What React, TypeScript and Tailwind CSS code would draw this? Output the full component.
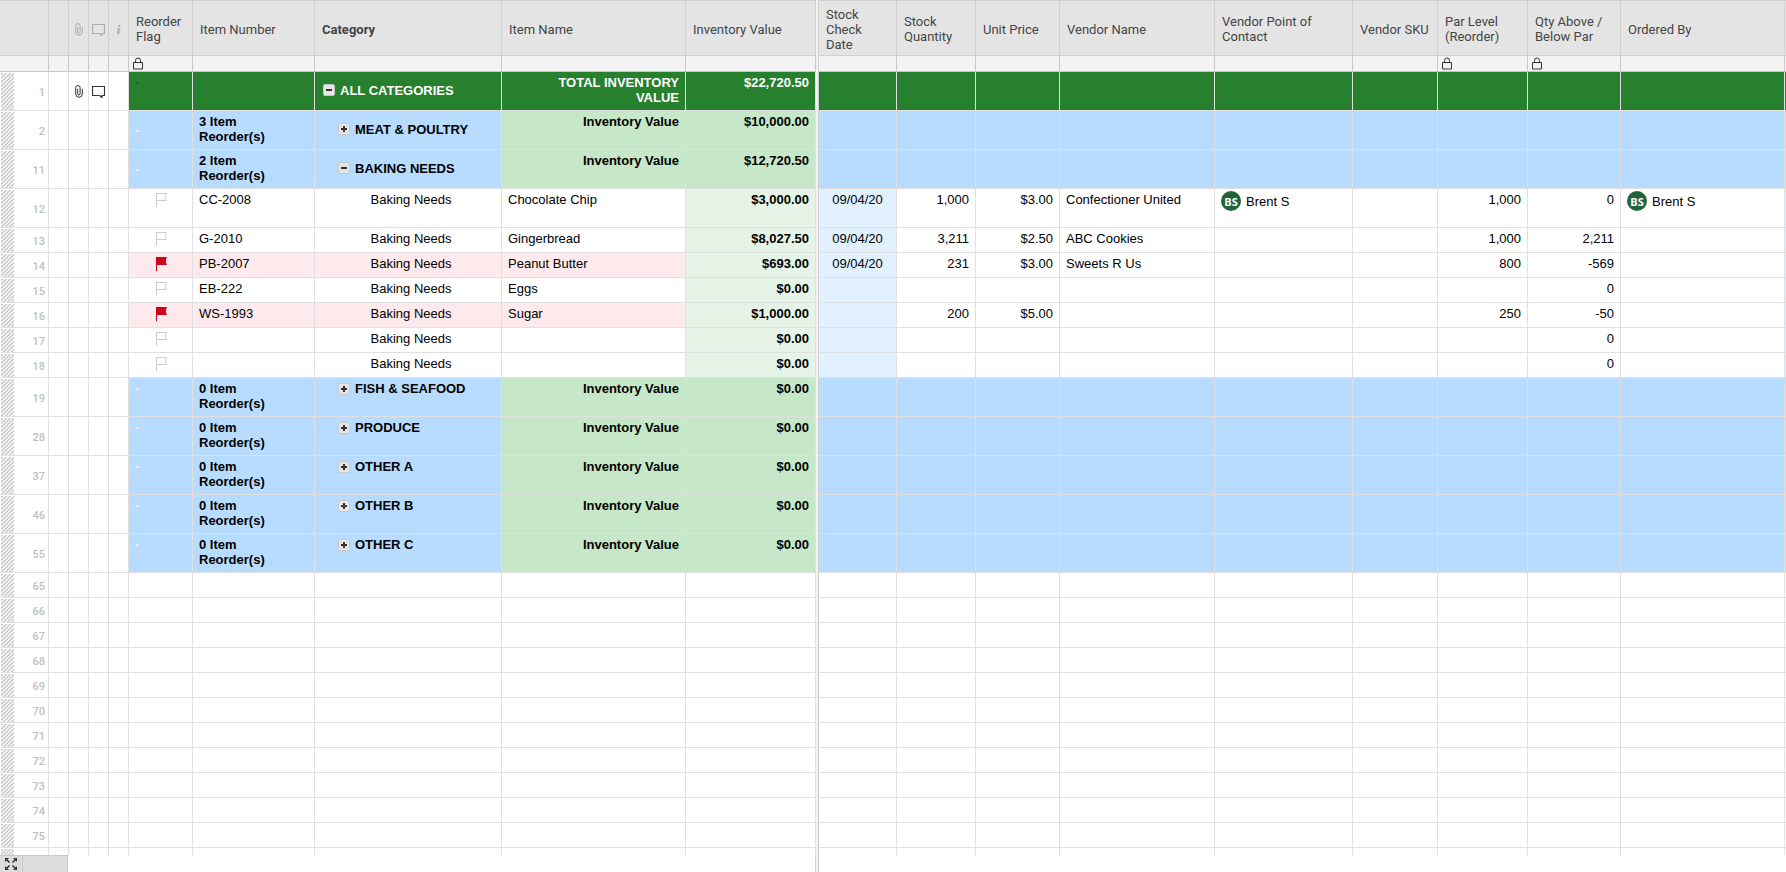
import type { ReactNode } from "react";

type Column = {
  key: string;
  label: string;
  width: string;
  bold?: boolean;
  locked?: boolean;
  align?: "left" | "center" | "right";
};

type Row = {
  num?: number;
  kind: "total" | "group" | "item" | "blank";
  tall?: boolean;
  attachments?: boolean;
  flag?: boolean;
  open?: boolean;
  middle?: boolean;
  values?: Record<string, string>;
};

const frozen: Column[] = [
  { key: "flag", label: "Reorder Flag", width: "w-[64px]", locked: true },
  { key: "number", label: "Item Number", width: "w-[122px]" },
  { key: "category", label: "Category", width: "w-[187px]", bold: true },
  { key: "name", label: "Item Name", width: "w-[184px]" },
  { key: "value", label: "Inventory Value", width: "w-[130px]", align: "right" },
];

const scrolling: Column[] = [
  { key: "checked", label: "Stock Check Date", width: "w-[78px]", align: "center" },
  { key: "quantity", label: "Stock Quantity", width: "w-[79px]", align: "right" },
  { key: "price", label: "Unit Price", width: "w-[84px]", align: "right" },
  { key: "vendor", label: "Vendor Name", width: "w-[155px]" },
  { key: "contact", label: "Vendor Point of Contact", width: "w-[138px]" },
  { key: "sku", label: "Vendor SKU", width: "w-[85px]" },
  { key: "par", label: "Par Level (Reorder)", width: "w-[90px]", locked: true, align: "right" },
  { key: "diff", label: "Qty Above / Below Par", width: "w-[93px]", locked: true, align: "right" },
  { key: "ordered", label: "Ordered By", width: "w-auto" },
];

const group = (num: number, category: string, reorders: number, value = "$0.00"): Row => ({
  num,
  kind: "group",
  tall: true,
  values: { number: `${reorders} Item Reorder(s)`, category, name: "Inventory Value", value },
});

const rows: Row[] = [
  {
    num: 1,
    kind: "total",
    tall: true,
    attachments: true,
    open: true,
    middle: true,
    values: { category: "ALL CATEGORIES", name: "TOTAL INVENTORY VALUE", value: "$22,720.50" },
  },
  { ...group(2, "MEAT & POULTRY", 3, "$10,000.00"), middle: true },
  { ...group(11, "BAKING NEEDS", 2, "$12,720.50"), middle: true, open: true },
  {
    num: 12,
    kind: "item",
    tall: true,
    values: {
      number: "CC-2008", category: "Baking Needs", name: "Chocolate Chip", value: "$3,000.00",
      checked: "09/04/20", quantity: "1,000", price: "$3.00", vendor: "Confectioner United",
      contact: "Brent S", par: "1,000", diff: "0", ordered: "Brent S",
    },
  },
  {
    num: 13,
    kind: "item",
    values: {
      number: "G-2010", category: "Baking Needs", name: "Gingerbread", value: "$8,027.50",
      checked: "09/04/20", quantity: "3,211", price: "$2.50", vendor: "ABC Cookies",
      par: "1,000", diff: "2,211",
    },
  },
  {
    num: 14,
    kind: "item",
    flag: true,
    values: {
      number: "PB-2007", category: "Baking Needs", name: "Peanut Butter", value: "$693.00",
      checked: "09/04/20", quantity: "231", price: "$3.00", vendor: "Sweets R Us",
      par: "800", diff: "-569",
    },
  },
  { num: 15, kind: "item", values: { number: "EB-222", category: "Baking Needs", name: "Eggs", value: "$0.00", diff: "0" } },
  {
    num: 16,
    kind: "item",
    flag: true,
    values: {
      number: "WS-1993", category: "Baking Needs", name: "Sugar", value: "$1,000.00",
      quantity: "200", price: "$5.00", par: "250", diff: "-50",
    },
  },
  { num: 17, kind: "item", values: { category: "Baking Needs", value: "$0.00", diff: "0" } },
  { num: 18, kind: "item", values: { category: "Baking Needs", value: "$0.00", diff: "0" } },
  group(19, "FISH & SEAFOOD", 0),
  group(28, "PRODUCE", 0),
  group(37, "OTHER A", 0),
  group(46, "OTHER B", 0),
  group(55, "OTHER C", 0),
  ...Array.from({ length: 11 }, (_, i): Row => ({ num: 65 + i, kind: "blank" })),
  { kind: "blank" },
];

function Paperclip({ className }: { className: string }) {
  return (
    <svg width="8" height="13" viewBox="0 0 8 13" fill="none" stroke="currentColor" className={className}>
      <path d="M2.7 3.8v5a1.2 1.2 0 0 0 2.4 0V2.700a2.200 2.200 0 0 0-4.400 0v6.300a3.300 3.300 0 0 0 6.600 0V3.800" />
    </svg>
  );
}

function Comment({ className }: { className: string }) {
  return (
    <svg width="13" height="13" viewBox="0 0 13 13" fill="none" stroke="currentColor" className={className}>
      <path d="M.5 1.500h12v9h-2.500v2l-2.500-2h-7z" strokeWidth="1.200" />
    </svg>
  );
}

function Lock() {
  return (
    <svg width="10" height="13" viewBox="0 0 10 13" fill="none" stroke="#333" className="ml-1" aria-label="Locked">
      <path d="M.5 5.5h9v6.500h-9zM2.500 5.500v-2a2.500 2.500 0 0 1 5 0v2" />
    </svg>
  );
}

function Flag({ on }: { on?: boolean }) {
  return (
    <svg width="12" height="15" viewBox="0 0 12 15" fill={on ? "#d0021b" : "none"} stroke={on ? "#d0021b" : "#ccc"} className="ml-5">
      <path d="M1.500 15V1M1.500 1.500h10c-1.600 2.400-1.600 4.600 0 7h-10z" />
    </svg>
  );
}

function Toggle({ open }: { open?: boolean }) {
  return (
    <button
      aria-label={open ? "Collapse" : "Expand"}
      className="flex size-3 shrink-0 items-center justify-center rounded-xs border border-[#c8c8c8] bg-[#e6e6e6]"
    >
      <svg width="6" height="6" viewBox="0 0 6 6" stroke="#333" strokeWidth="2">
        <path d={open ? "M0 3h6" : "M0 3h6M3 0v6"} />
      </svg>
    </button>
  );
}

function Person({ name }: { name: string }) {
  return (
    <span className="-mt-px flex items-center gap-[5px]">
      <span className="flex size-5 items-center justify-center rounded-full bg-[#236339] font-['Open_Sans',sans-serif] text-[11px] font-bold text-white">
        BS
      </span>
      {name}
    </span>
  );
}

const line = "border-r border-b border-[#e0e0e0]";

function cellColor(row: Row, key: string) {
  if (row.kind === "total") return "bg-[#26802d] text-white";
  if (row.kind === "group") return key === "name" || key === "value" ? "bg-[#c6e7c8]" : "bg-[#b8dcff]";
  if (row.kind === "item") {
    if (key === "value") return "bg-[#e6f4e7]";
    if (key === "checked") return "bg-[#e1f1ff]";
    if (row.flag && ["flag", "number", "category", "name"].includes(key)) return "bg-[#feeaec]";
  }
  return "bg-white";
}

function cellPadding(row: Row, key: string) {
  if (key === "number") return "pt-[3px] pr-5 pb-[3px] pl-1.5";
  if (key === "name" && row.kind === "total") return "pt-[3px] pr-1.5 pb-[3px] pl-5";
  if (key === "category" && row.kind === "item") return "pt-[3px] pr-1.5 pb-[3px] pl-3";
  if (key === "category" && row.middle) return "px-1.5 pt-[3px] pb-[5px]";
  return "px-1.5 py-[3px]";
}

function Cell({ row, col }: { row: Row; col: Column }) {
  const summary = row.kind === "total" || row.kind === "group";
  const text = row.values?.[col.key];
  let align = col.align ?? "left";
  if (summary && col.key === "name") align = "right";
  if (row.kind === "item" && col.key === "category") align = "center";

  const middle =
    row.middle && (col.key === "category" || (col.key === "flag" && row.kind === "group"));

  let content: ReactNode = text;
  if (col.key === "flag") {
    if (row.kind === "item") content = <Flag on={row.flag} />;
    if (row.kind === "total") content = <span className="text-[#1d4a80]">-</span>;
    if (row.kind === "group") content = <span className="text-[#e6f2ff]">-</span>;
  } else if (col.key === "category" && summary) {
    content = (
      <span className={row.kind === "total" ? "flex items-center gap-[5px] pl-0.5" : "flex items-center gap-[5px] pl-[17px]"}>
        <Toggle open={row.open} />
        {text}
      </span>
    );
  } else if (text && (col.key === "contact" || col.key === "ordered")) {
    content = <Person name={text} />;
  }

  return (
    <td
      className={[
        line,
        cellPadding(row, col.key),
        cellColor(row, col.key),
        summary || col.key === "value" ? "font-bold" : "",
        middle ? "align-middle" : "align-top",
        align === "right" ? "text-right" : align === "center" ? "text-center" : "text-left",
      ].join(" ")}
    >
      {content}
    </td>
  );
}

function HeaderCell({ col }: { col: Column }) {
  return (
    <th
      scope="col"
      className={`border-t border-r border-b border-[#d0d0d0] px-[7px] pt-1 pb-0.5 text-left align-middle ${col.bold ? "font-bold" : "font-normal"}`}
    >
      {col.label}
    </th>
  );
}

function LockCell({ col }: { col: Column }) {
  return <td className="border-r border-b border-[#c8c8c8] p-0">{col.locked && <Lock />}</td>;
}

export default function App() {
  return (
    <div className="flex h-screen flex-col overflow-hidden bg-white font-['Liberation_Sans',Arial,sans-serif] text-[13px] leading-[15px] text-black">
      <div className="min-h-0 flex-1 overflow-hidden">
        <table className="w-full min-w-[1700px] table-fixed border-separate border-spacing-0">
          <colgroup>
            <col className="w-[14px]" />
            <col className="w-[35px]" />
            <col className="w-[20px]" />
            <col className="w-[20px]" />
            <col className="w-[20px]" />
            <col className="w-[20px]" />
            {frozen.map((col) => <col key={col.key} className={col.width} />)}
            <col className="w-[3px]" />
            {scrolling.map((col) => <col key={col.key} className={col.width} />)}
            <col className="w-px" />
          </colgroup>
          <thead className="font-[Roboto,sans-serif] text-[#444]">
            <tr className="h-14 bg-[#e4e4e4]">
              <th colSpan={2} className="border-t border-r border-b border-[#d0d0d0] p-0" />
              <th className="border-t border-r border-b border-[#d0d0d0] p-0" />
              <th className="border-t border-r border-b border-[#d0d0d0] p-0 pt-0.5"><Paperclip className="mx-auto text-[#aaa]" /></th>
              <th className="border-t border-r border-b border-[#d0d0d0] p-0 pt-0.5"><Comment className="mx-auto text-[#aaa]" /></th>
              <th className="border-t border-r border-b border-[#d0d0d0] p-0 pt-0.5 font-['Liberation_Serif',serif] font-bold italic text-[#aaa]">i</th>
              {frozen.map((col) => <HeaderCell key={col.key} col={col} />)}
              <th className="border-r border-[#d0d0d0] bg-[#f2f2f2] p-0" />
              {scrolling.map((col) => <HeaderCell key={col.key} col={col} />)}
              <th className="border-t border-b border-[#d0d0d0] p-0" />
            </tr>
            <tr className="h-4 bg-[#f3f3f3]">
              <td colSpan={2} className="border-r border-b border-[#c8c8c8] p-0" />
              {[0, 1, 2, 3].map((i) => <td key={i} className="border-r border-b border-[#c8c8c8] p-0" />)}
              {frozen.map((col) => <LockCell key={col.key} col={col} />)}
              <td className="border-r border-[#d0d0d0] p-0" />
              {scrolling.map((col) => <LockCell key={col.key} col={col} />)}
              <td className="border-b border-[#c8c8c8] p-0" />
            </tr>
          </thead>
          <tbody>
            {rows.map((row, i) => (
              <tr key={i} className={row.tall ? "h-[39px]" : "h-[25px]"}>
                <td className="border-t border-b border-l border-t-white border-b-[#e0e0e0] border-l-white bg-[linear-gradient(135deg,#d0d0d0_25%,#f2f2f2_25%,#f2f2f2_50%,#d0d0d0_50%,#d0d0d0_75%,#f2f2f2_75%)] bg-size-[4px_4px] bg-clip-padding p-0" />
                <th scope="row" className={`${line} p-0 pt-0.5 pr-[3px] text-right align-middle font-[Roboto,sans-serif] text-[11px] font-medium text-[#c0c0c0]`}>
                  {row.num}
                </th>
                <td className={`${line} p-0`} />
                <td className={`${line} p-0`}>{row.attachments && <Paperclip className="mx-auto text-[#333]" />}</td>
                <td className={`${line} p-0`}>{row.attachments && <Comment className="mx-auto text-[#333]" />}</td>
                <td className={`${line} p-0`} />
                {frozen.map((col) => <Cell key={col.key} row={row} col={col} />)}
                <td className="border-r border-[#d0d0d0] bg-[#f2f2f2] p-0" />
                {scrolling.map((col) => <Cell key={col.key} row={row} col={col} />)}
                <td className={`border-b border-[#e0e0e0] p-0 ${cellColor(row, "checked")}`} />
              </tr>
            ))}
          </tbody>
        </table>
      </div>
      <footer className="flex h-[17px] shrink-0">
        <div className="flex w-[815px] shrink-0">
          <button aria-label="Full screen" className="flex w-[23px] items-center justify-center border-t border-r border-[#c8c8c8] bg-[#dcdcdc]">
            <svg width="12" height="12" viewBox="0 0 12 12" fill="#333" stroke="#333" strokeWidth="1.5">
              <path stroke="none" d="M0 0h4L0 4zM12 0v4L8 0zM0 12V8l4 4zM12 12H8l4-4z" />
              <path d="M1.5 1.500l3 3M10.500 1.500l-3 3M1.500 10.500l3-3M10.500 10.500l-3-3" />
            </svg>
          </button>
          <div className="w-[45px] border-t border-r border-[#c8c8c8] bg-[#dcdcdc]" />
        </div>
        <div className="w-1 shrink-0 border-x border-[#d0d0d0] bg-[#f2f2f2]" />
      </footer>
    </div>
  );
}
